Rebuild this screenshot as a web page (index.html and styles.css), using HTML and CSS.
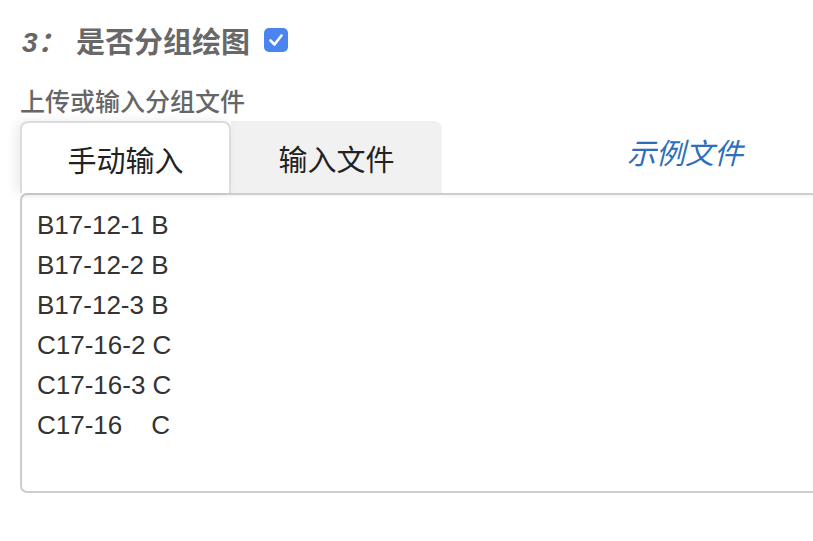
FILE: index.html
```html
<!DOCTYPE html>
<html lang="zh">
<head>
<meta charset="utf-8">
<title>分组绘图</title>
<link rel="stylesheet" href="styles.css">
</head>
<body>
<div class="panel">
  <div class="title">
    <span class="num">3：</span>
    <span class="title-text">是否分组绘图</span>
    <span class="check">
      <svg width="24" height="24" viewBox="0 0 24 24"><rect x="0" y="0" width="24" height="24" rx="5" fill="#4a84ee"/><path d="M6.5 12.5 L10.5 16.5 L17.5 7.5" fill="none" stroke="#fff" stroke-width="2.6" stroke-linecap="round" stroke-linejoin="round"/></svg>
    </span>
  </div>
  <div class="label">上传或输入分组文件</div>
  <div class="tabs">
    <div class="tab active">手动输入</div>
    <div class="tab">输入文件</div>
    <a class="example">示例文件</a>
  </div>
  <textarea class="input" spellcheck="false">B17-12-1 B
B17-12-2 B
B17-12-3 B
C17-16-2 C
C17-16-3 C
C17-16    C</textarea>
</div>
</body>
</html>
```
FILE: styles.css
```css
html, body {
  margin: 0;
  padding: 0;
  overflow: hidden;
  background: #fff;
}
body {
  font-family: "Liberation Sans", "Noto Sans CJK SC", sans-serif;
  width: 813px;
  height: 541px;
}
.panel {
  padding: 20px 0 0 20px;
}
.title {
  display: flex;
  align-items: center;
  height: 40px;
  color: #666;
  font-weight: bold;
}
.num {
  font-family: "Liberation Sans", "Noto Sans CJK SC", sans-serif;
  font-style: italic;
  font-size: 28px;
  width: 54px;
  padding-left: 2px;
}
.title-text {
  font-family: "Noto Sans CJK SC", sans-serif;
  font-size: 29px;
  font-weight: bold;
  line-height: 40px;
  color: #686868;
}
.check {
  display: inline-flex;
  margin-left: 14px;
}
.label {
  margin-top: 25px;
  height: 36px;
  line-height: 30px;
  font-family: "Noto Sans CJK SC", sans-serif;
  font-size: 25px;
  font-weight: 500;
  color: #666;
}
.tabs {
  display: flex;
  align-items: stretch;
  height: 72px;
}
.tab {
  width: 211px;
  box-sizing: border-box;
  display: flex;
  align-items: center;
  justify-content: center;
  font-family: "Noto Sans CJK SC", sans-serif;
  font-size: 29px;
  color: #222;
  background: #f1f1f1;
  border-radius: 0 8px 0 0;
  padding-top: 2px;
}
.tab.active {
  background: #fff;
  border: 2px solid #dcdcdc;
  border-bottom: none;
  border-radius: 8px 8px 0 0;
  box-shadow: -4px 0 12px rgba(0, 0, 0, 0.08);
  position: relative;
  z-index: 1;
}
.example {
  margin-left: 185px;
  align-self: center;
  margin-top: -12px;
  font-family: "Noto Sans CJK SC", sans-serif;
  font-style: italic;
  font-size: 29px;
  color: #2e6fbb;
}
.input {
  display: block;
  box-sizing: border-box;
  width: 793px;
  height: 300px;
  margin: 0;
  padding: 10px 15px 0;
  border: 2px solid #cdcdcd;
  border-right: none;
  border-radius: 7px 0 0 7px;
  resize: none;
  outline: none;
  overflow: hidden;
  font-family: "Liberation Sans", sans-serif;
  font-size: 26px;
  line-height: 40px;
  color: #333;
  background: #fff;
  box-shadow: inset 0 2px 3px rgba(0, 0, 0, 0.04);
}
```
